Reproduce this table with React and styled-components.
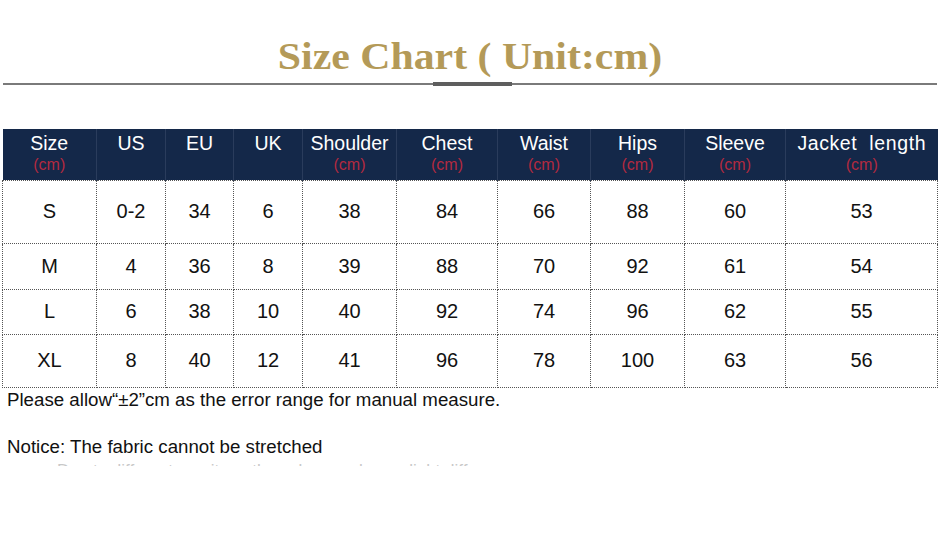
import React from 'react'
import styled, { createGlobalStyle } from 'styled-components'

const Global = createGlobalStyle`
  body {
    margin: 0;
    background: #fff;
    font-family: "Liberation Sans", Arial, sans-serif;
  }
`

const Page = styled.div`
  width: 940px;
  height: 557px;
  overflow: hidden;
  background: #fff;
`

const Title = styled.h1`
  margin: 0;
  padding-top: 35px;
  height: 44px;
  text-align: center;
  font-family: "Liberation Serif", "Times New Roman", serif;
  font-weight: bold;
  font-size: 37px;
  line-height: 44px;
  color: #b49a58;
  transform: scaleX(1.13);
`

const Rule = styled.div`
  position: relative;
  margin: 4px 3px 0 3px;
  height: 2px;
  background: #7a7a7a;

  &::after {
    content: '';
    position: absolute;
    left: 430px;
    top: -1px;
    width: 79px;
    height: 4px;
    background: #5e5e5e;
  }
`

const Table = styled.table`
  margin: 44px 0 0 2px;
  border-collapse: collapse;
  table-layout: fixed;
  width: 935px;
`

const HeadCell = styled.th`
  background: #142849;
  color: #fff;
  font-weight: normal;
  font-size: 19.5px;
  line-height: 22px;
  height: 51px;
  padding: 0 0 2px 0;
  text-align: center;
  vertical-align: middle;
  border-right: 1px solid #2a3c5c;
  box-sizing: border-box;
  letter-spacing: ${p => (p.$wide ? '0.6px' : '0')};

  &:last-child {
    border-right: none;
  }
`

const Label = styled.span`
  display: block;
  white-space: pre;
`

const Unit = styled.span`
  display: block;
  color: #b22a40;
  font-size: 16px;
  line-height: 20px;
  letter-spacing: 0;
  margin-top: 1px;
`

const Cell = styled.td`
  height: ${p => p.$h}px;
  padding: 0;
  text-align: center;
  vertical-align: middle;
  font-size: 20px;
  color: #111;
  border: 1px dotted #555;
  box-sizing: border-box;
`

const Notes = styled.div`
  padding: 0 0 0 7px;
  font-size: 18.7px;
  color: #111;
`

const Note = styled.p`
  margin: 0;
  line-height: 24px;
  & + & {
    margin-top: 23px;
  }
`

const Faded = styled.p`
  margin: 0;
  height: 7px;
  overflow: hidden;
  padding-left: 50px;
  font-size: 17px;
  line-height: 24px;
  color: #c8c8c8;
`

const columns = [
  { label: 'Size', w: 94 },
  { label: 'US', w: 69, noUnit: true },
  { label: 'EU', w: 68, noUnit: true },
  { label: 'UK', w: 69, noUnit: true },
  { label: 'Shoulder', w: 94 },
  { label: 'Chest', w: 101 },
  { label: 'Waist', w: 93 },
  { label: 'Hips', w: 94 },
  { label: 'Sleeve', w: 101 },
  { label: 'Jacket  length', w: 152, wide: true },
]

const rows = [
  { h: 63, cells: ['S', '0-2', '34', '6', '38', '84', '66', '88', '60', '53'] },
  { h: 46, cells: ['M', '4', '36', '8', '39', '88', '70', '92', '61', '54'] },
  { h: 45, cells: ['L', '6', '38', '10', '40', '92', '74', '96', '62', '55'] },
  { h: 53, cells: ['XL', '8', '40', '12', '41', '96', '78', '100', '63', '56'] },
]

const App = () => {
  return (
    <Page>
      <Global />
      <Title>Size Chart ( Unit:cm)</Title>
      <Rule />
      <Table>
        <colgroup>
          {columns.map(c => (
            <col key={c.label} style={{ width: c.w }} />
          ))}
        </colgroup>
        <thead>
          <tr>
            {columns.map(c => (
              <HeadCell key={c.label} $wide={c.wide}>
                <Label>{c.label}</Label>
                <Unit>{c.noUnit ? '\u00a0' : '(cm)'}</Unit>
              </HeadCell>
            ))}
          </tr>
        </thead>
        <tbody>
          {rows.map(r => (
            <tr key={r.cells[0]}>
              {r.cells.map((v, i) => (
                <Cell key={i} $h={r.h}>{v}</Cell>
              ))}
            </tr>
          ))}
        </tbody>
      </Table>
      <Notes>
        <Note>Please allow“±2”cm as the error range for manual measure.</Note>
        <Note>Notice: The fabric cannot be stretched</Note>
        <Faded>Due to different monitors, the color may have slight difference.</Faded>
      </Notes>
    </Page>
  )
}

export default App
